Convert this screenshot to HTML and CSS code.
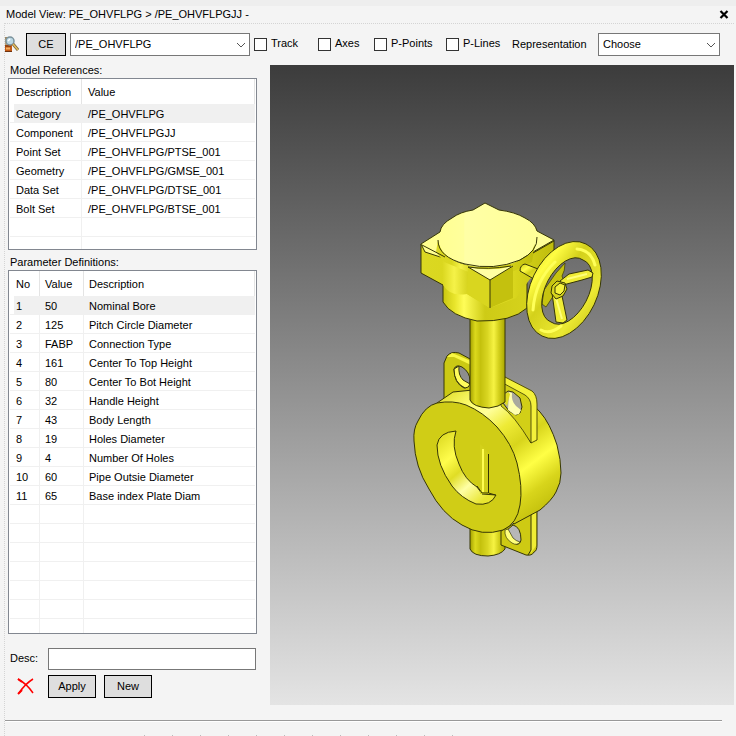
FILE: index.html
```html
<!DOCTYPE html>
<html lang="en">
<head>
<meta charset="utf-8">
<title>Model View</title>
<link rel="stylesheet" href="styles.css">
</head>
<body>
<main class="window">
  <header class="titlebar">
    <h1>Model View: PE_OHVFLPG &gt; /PE_OHVFLPGJJ -</h1>
    <button class="close" type="button" aria-label="Close">
      <svg width="10" height="10" viewBox="0 0 10 10"><path d="M1.500 1 8.500 8M8.500 1 1.500 8" stroke="#000" stroke-width="2.200"/></svg>
    </button>
  </header>
  <div class="panel">
    <div class="toolbar">
      <svg class="find" width="14" height="18" viewBox="0 0 14 18" aria-hidden="true">
        <path d="M0 9h7v7H0z" fill="#c55b14"/><path d="M0 10h6M0 15.500h7" stroke="#6d3210"/><path d="M1 12.500h4" stroke="#f4b162" stroke-width="2"/>
        <path d="M0 1h6l3 3v5H0z" fill="#b8a27a"/><path d="M0 2h6" stroke="#8a744e"/>
        <circle cx="5" cy="5" r="4" fill="#bcd8e4" stroke="#7b929c" stroke-width="1.500"/>
        <path d="m3 5 2-2" stroke="#fff" stroke-width="1.500"/>
        <path d="m8 8 5 6" stroke="#766344" stroke-width="3"/><path d="m8 8 5 6" stroke="#e3bd59" stroke-width="1.500"/>
      </svg>
      <button class="btn ce" type="button">CE</button>
      <span class="combo element"><select aria-label="Element"><option>/PE_OHVFLPG</option></select><svg viewBox="0 0 10 6"><path d="m1 1 4 4 4-4"/></svg></span>
      <label class="check track"><input type="checkbox">Track</label>
      <label class="check axes"><input type="checkbox">Axes</label>
      <label class="check points"><input type="checkbox">P-Points</label>
      <label class="check lines"><input type="checkbox">P-Lines</label>
      <label class="rep" for="rep">Representation</label>
      <span class="combo choose"><select id="rep"><option>Choose</option></select><svg viewBox="0 0 10 6"><path d="m1 1 4 4 4-4"/></svg></span>
    </div>
    <div class="content">
      <section class="side">
        <h2>Model References:</h2>
        <div class="list">
          <table class="refs">
            <colgroup><col class="c-key"><col></colgroup>
            <thead><tr><th>Description</th><th>Value</th></tr></thead>
            <tbody>
              <tr class="selected"><td>Category</td><td>/PE_OHVFLPG</td></tr>
              <tr><td>Component</td><td>/PE_OHVFLPGJJ</td></tr>
              <tr><td>Point Set</td><td>/PE_OHVFLPG/PTSE_001</td></tr>
              <tr><td>Geometry</td><td>/PE_OHVFLPG/GMSE_001</td></tr>
              <tr><td>Data Set</td><td>/PE_OHVFLPG/DTSE_001</td></tr>
              <tr><td>Bolt Set</td><td>/PE_OHVFLPG/BTSE_001</td></tr>
              <tr><td></td><td></td></tr>
              <tr class="last"><td></td><td></td></tr>
            </tbody>
          </table>
        </div>
        <h2>Parameter Definitions:</h2>
        <div class="list">
          <table class="params">
            <colgroup><col class="c-no"><col class="c-val"><col></colgroup>
            <thead><tr><th>No</th><th>Value</th><th>Description</th></tr></thead>
            <tbody>
              <tr class="selected"><td>1</td><td>50</td><td>Nominal Bore</td></tr>
              <tr><td>2</td><td>125</td><td>Pitch Circle Diameter</td></tr>
              <tr><td>3</td><td>FABP</td><td>Connection Type</td></tr>
              <tr><td>4</td><td>161</td><td>Center To Top Height</td></tr>
              <tr><td>5</td><td>80</td><td>Center To Bot Height</td></tr>
              <tr><td>6</td><td>32</td><td>Handle Height</td></tr>
              <tr><td>7</td><td>43</td><td>Body Length</td></tr>
              <tr><td>8</td><td>19</td><td>Holes Diameter</td></tr>
              <tr><td>9</td><td>4</td><td>Number Of Holes</td></tr>
              <tr><td>10</td><td>60</td><td>Pipe Outsie Diameter</td></tr>
              <tr><td>11</td><td>65</td><td>Base index Plate Diam</td></tr>
              <tr><td></td><td></td><td></td></tr>
              <tr><td></td><td></td><td></td></tr>
              <tr><td></td><td></td><td></td></tr>
              <tr><td></td><td></td><td></td></tr>
              <tr><td></td><td></td><td></td></tr>
              <tr><td></td><td></td><td></td></tr>
              <tr class="last"><td></td><td></td><td></td></tr>
            </tbody>
          </table>
        </div>
        <form class="edit">
          <label for="desc">Desc:</label>
          <input id="desc" type="text">
          <button class="remove" type="button" aria-label="Delete">
            <svg width="18" height="18" viewBox="0 0 18 18"><path d="M1 1q9 5 15 14" stroke="#f00" stroke-width="1.500" fill="none"/><path d="M16 1Q8 6 2 15" stroke="#f00" stroke-width="1.500" fill="none"/><path d="m1 1 4 3M1 16l4-4" stroke="#f00" stroke-width="2"/></svg>
          </button>
          <div class="actions"><button class="btn" type="button">Apply</button><button class="btn" type="button">New</button></div>
        </form>
      </section>
      <section class="view" aria-label="Model">
        <svg class="model" viewBox="270 65 464 640">
          <defs>
            <linearGradient id="stem"><stop offset="0" stop-color="#a3a000"/><stop offset=".15" stop-color="#dcd91c"/><stop offset=".3" stop-color="#c4c10d"/><stop offset=".5" stop-color="#d9d622"/><stop offset=".68" stop-color="#f6f342"/><stop offset=".82" stop-color="#d4d11c"/><stop offset="1" stop-color="#aaa700"/></linearGradient>
            <linearGradient id="gear"><stop offset="0" stop-color="#dbd822"/><stop offset=".16" stop-color="#dad71f"/><stop offset=".25" stop-color="#f5f248"/><stop offset=".37" stop-color="#d1ce18"/><stop offset=".55" stop-color="#e5e22c"/><stop offset=".72" stop-color="#d7d41b"/><stop offset="1" stop-color="#bfbc0c"/></linearGradient>
            <linearGradient id="neck"><stop offset="0" stop-color="#c9c610"/><stop offset=".14" stop-color="#e8e52c"/><stop offset=".25" stop-color="#fffd58"/><stop offset=".5" stop-color="#cecb16"/><stop offset="1" stop-color="#d5d21c"/></linearGradient>
            <linearGradient id="top"><stop offset="0" stop-color="#ffff8c"/><stop offset=".32" stop-color="#ffff9c"/><stop offset=".33" stop-color="#ffffa6"/><stop offset="1" stop-color="#ffff94"/></linearGradient>
            <linearGradient id="rim" gradientUnits="userSpaceOnUse" x1="445" y1="388" x2="545" y2="520"><stop offset="0" stop-color="#dedb25"/><stop offset=".18" stop-color="#ffff75"/><stop offset=".27" stop-color="#ffff9a"/><stop offset=".4" stop-color="#eeeb36"/><stop offset=".53" stop-color="#d8d51c"/><stop offset=".68" stop-color="#ffff45"/><stop offset=".82" stop-color="#d8d51b"/><stop offset="1" stop-color="#bbb807"/></linearGradient>
            <linearGradient id="bore" x2=".7" y2="1"><stop offset="0" stop-color="#d7d41b"/><stop offset=".35" stop-color="#fffd4c"/><stop offset=".55" stop-color="#e0dd25"/><stop offset=".75" stop-color="#ffffa5"/><stop offset="1" stop-color="#e8e530"/></linearGradient>
            <linearGradient id="wheel" x2="1" y2="1"><stop offset="0" stop-color="#d0cd16"/><stop offset=".25" stop-color="#fffd43"/><stop offset=".42" stop-color="#d4d11b"/><stop offset=".7" stop-color="#ece933"/><stop offset="1" stop-color="#b6b308"/></linearGradient>
          </defs>
          <g stroke="#363606" stroke-width="1" stroke-linejoin="round">
            <!-- rear lug -->
            <path fill="#cbc914" fill-rule="evenodd" d="M444 402V363l3-7q4-5 12-3l13 7v40zM454 369q2-5 8-2 8 5 8 14-1 7-6 7-10-5-10-19z"/>
            <path fill="#f9f745" stroke="none" d="m447 357 5-4 19 8v4l-17-8z"/>
            <path fill="#fffc5c" d="m454 369 5-3q-1 9 4 14l7 4q-1 4-5 4-11-5-11-19z"/>
            <!-- lower stem and lug -->
            <path fill="url(#stem)" d="M470 520v29q3 7 18 7 13-1 17-7v-29z"/>
            <path fill="#ceca13" fill-rule="evenodd" d="M501 531v14l25 10q6 1 8-3 3-1 3-7v-36l-12 8zM506 531l7-6q8 2 8 15-1 5-5 4-10-5-10-13z"/>
            <path fill="#f0ed35" stroke="none" d="M531 512h5v34l-5 7z"/><path fill="none" d="M531 512v38l-3 5"/>
            <path fill="#ffff7b" stroke-width=".7" d="m505 530 3-1 5 9q3 3 7 4-3 4-8 1-8-5-7-13z"/>
            <!-- wafer body -->
            <path fill="url(#rim)" d="m437 403 16-11 20-2h38q18 9 29 22 10 11 17 33 4 15 4 28 0 10-5 19-4 8-16 18l-26 14-80-80z"/>
            <path fill="#d0cd16" d="M414 441q-1-12 4-20 7-15 19-18 16-3 29 2 17 7 31 22 15 17 20 36 6 24 3 42-3 19-17 25-21 7-41-5-20-11-33-36-14-22-15-48z"/>
            <path fill="url(#bore)" d="M456 431q-17 1-19 14 0 20 15 41 9 12 24 18 15 2 20-9l-14-1q-2-3-5-7-12-7-18-23-8-18-3-33z"/>
            <path fill="#d3d01b" stroke="none" d="M480 444q4 3 9 10v40h-9z"/><path fill="none" stroke="#fffd50" stroke-width="2" d="M483 449v43"/><path fill="none" d="M488.500 454v39l7 2M477 486l5 7h6"/>
            <!-- front lug -->
            <path fill="#f4f13b" stroke="#555204" d="M501 382l4-5 27 14q5 4 5 13v36l-6 3z"/>
            <path fill="#d2cf17" stroke-width=".8" d="M501 382l24 13q6 4 6 11v37q-17-28-30-37z"/>
            <path fill="#aaa99e" d="m503 395 5-4 5 1 7 6 2 9-2 6-4 2-7-4-6-8z"/>
            <path fill="#ffffae" stroke="none" d="m509 392 3 1q-1 8 4 13l5 4-2 4-4 1-7-5z"/>
            <path fill="#dedb22" stroke="none" d="m503 395 5-3 2 2-3 12-4-5z"/>
            <!-- stem -->
            <path fill="url(#stem)" d="M470 312v88q3 7 19 8 10-1 16-6v-90z"/>
            <!-- gearbox -->
            <path fill="url(#neck)" d="M443 282v20q8 14 34 19 35 1 50-13v-40z"/>
            <path fill="url(#gear)" stroke="none" d="M421 244v29l22 12q7 12 24 9l23 14 26-10 14-19 24-12v-26z"/>
            <path fill="none" d="M421 244v29l22 12M554 240v14"/>
            <path fill="url(#top)" d="m421 244 19-12q1-8 12-14 8-6 21-8l12-7 14 7q16 2 26 8 10 5 12 13l17 9-21 12-43 27-22-13-43-14z"/>
            <path fill="url(#gear)" stroke="none" d="M438 240q4 23 40 27 40 1 54-16l3-7-3 18-18 9-24 8-24-8-22-9-8-10z"/>
            <path fill="none" d="M438 240q0 17 27 24 29 7 55-4 18-9 17-23M422 245l23 12M554 241l-21 12"/>
            <path fill="#d9d61f" stroke="none" d="m468 267 22 13v28l-23-14z"/><path fill="#c4c10e" stroke="none" d="m490 280 23-13v31l-23 10z"/>
            <path fill="#ffffa3" stroke="none" d="M468 267q22 5 45-1l-23 14z"/><path fill="none" d="m468 267 22 13 23-14M490 280v28M468 267q20 3 43-1"/>
            <!-- handwheel -->
            <path fill="url(#wheel)" d="M525 264q-5 1-5 7l19 11 7-10z"/>
            <path fill="#c7c410" stroke-width=".7" d="m544 290 12-17 9-10q0 8-3 13l4 13-12 6-8 12-4-3z"/>
            <path fill="url(#wheel)" fill-rule="evenodd" d="M586 244A33 51 25 1 1 542 336A33 51 25 1 1 586 244zM583 260A20 35 27 1 0 551 322A20 35 27 1 0 583 260z"/>
            <path fill="#f0ed35" d="m560 281 9-7 19-4 5 3-1 4-10 3-19 5zM552 293l9-2 6 29-4 3-7-1z"/>
            <path fill="none" stroke="#ffff7b" stroke-width="2" d="m567 279 20-5M556 298l6 21"/>
            <path fill="#d8d51e" d="m552 286 5-5 8 2 2 6-4 7-7 3-5-6z"/><path fill="#f5f23b" d="m555 287 5-4 5 2-1 6-4 4-5-2z"/>
            <g fill="none" stroke="#ffff58" stroke-width="3" stroke-linecap="round"><path d="M533 310q2-29 22-48M577 249q14 1 18 16M541 330q9 5 20-4"/></g>
          </g>
        </svg>
      </section>
    </div>
    <footer class="foot"><span></span><span></span><span></span><span></span><span></span><span></span><span></span><span></span><span></span><span></span><span></span><span></span></footer>
  </div>
</main>
</body>
</html>
```
FILE: styles.css
```css
* { box-sizing: border-box; }
body { margin: 0; background: #f4f4f4; color: #000; font: 11px/16px "Liberation Sans", Arial, sans-serif; }
button, input, select { font: inherit; color: inherit; margin: 0; }
h1, h2 { margin: 0; font-size: 11px; font-weight: normal; }

.window { min-height: 100vh; display: flex; flex-direction: column; border-top: 6px solid #eee; }
.titlebar { height: 17px; display: flex; align-items: flex-start; justify-content: space-between; padding: 0 7px 0 6px; }
.close { border: 0; padding: 4px 0 0; background: none; display: flex; }
.panel { flex: 1; display: flex; flex-direction: column; margin: 0 2px 0 4px; border: 1px dotted #d4d4d4; border-bottom: 0; border-right: 0; }

.toolbar { height: 41px; display: flex; align-items: center; white-space: nowrap; }
.find { margin-right: 7px; flex: none; }
.btn { width: 48px; height: 23px; padding: 0 0 1px; border: 1px solid #000; background: #dedede; }
.ce { width: 40px; margin-right: 4px; }
.combo { position: relative; display: flex; }
.combo select { width: 100%; height: 23px; padding: 0 20px 2px 4px; border: 1px solid #777; border-radius: 0; background: #fff; appearance: none; }
.combo svg { position: absolute; right: 4px; top: 9px; width: 10px; height: 6px; fill: none; stroke: #555; stroke-width: 1; pointer-events: none; }
.element { width: 180px; margin-right: 4px; }
.choose { width: 122px; }
.check { display: flex; align-items: flex-start; gap: 4px; line-height: 10px; }
.check input { width: 13px; height: 13px; appearance: none; border: 1px solid #333; background: #fff; }
.track { width: 64px; }
.axes { width: 56px; }
.points { width: 72px; }
.lines { width: 66px; }
.rep { width: 86px; padding-bottom: 2px; }

.content { display: grid; grid-template-columns: 252px 1fr; column-gap: 13px; min-height: 640px; }
.side { padding-left: 3px; }
.side h2 { padding-left: 2px; height: 13px; line-height: 10px; }
.list { border: 1px solid #828790; background: #fff; padding: 0 1px; }
.list + h2 { margin-top: 5px; height: 15px; line-height: 15px; }
table { width: 100%; border-collapse: separate; border-spacing: 0; table-layout: fixed; }
.c-key { width: 72px; }
.c-no { width: 30px; }
.c-val { width: 44px; }
th, td { padding: 0 0 0 5px; font-weight: normal; text-align: left; white-space: nowrap; line-height: 16px; border-right: 1px solid #f0f0f0; }
.refs th, .refs td { padding-left: 6px; }
th:first-child, td:first-child { padding-left: 6px; }
th { height: 25px; border-right-color: #e4e4e4; }
td { height: 19px; padding-top: 2px; border-bottom: 1px solid #f0f0f0; }
td:last-child { border-right: 0; }
.selected td { background: #f0f0f0; }
.selected td:first-child { background: linear-gradient(90deg, #fff 4px, #f0f0f0 4px); }
.last td { height: 12px; border-bottom: 0; }
.params .last td { height: 14px; }

.edit { display: grid; grid-template-columns: 40px 1fr; row-gap: 5px; align-items: center; padding: 14px 1px 0 0; }
.edit label { padding: 0 0 2px 2px; }
.edit input { width: 100%; height: 22px; border: 1px solid #777; background: #fff; padding: 0 4px; }
.remove { border: 0; padding: 0 0 0 9px; background: none; display: flex; }
.actions { display: flex; gap: 8px; }

.view { display: flex; background: linear-gradient(#3c3c3c, #e4e4e4); }
.model { width: 100%; height: 100%; }
.foot { flex: 1; display: flex; gap: 27px; align-items: flex-end; margin: 15px 12px 0 0; padding-left: 139px; border-top: 1px solid #999; box-shadow: inset 0 1px #fff; }
.foot span { width: 1px; height: 1px; background: #bbb; }
```
